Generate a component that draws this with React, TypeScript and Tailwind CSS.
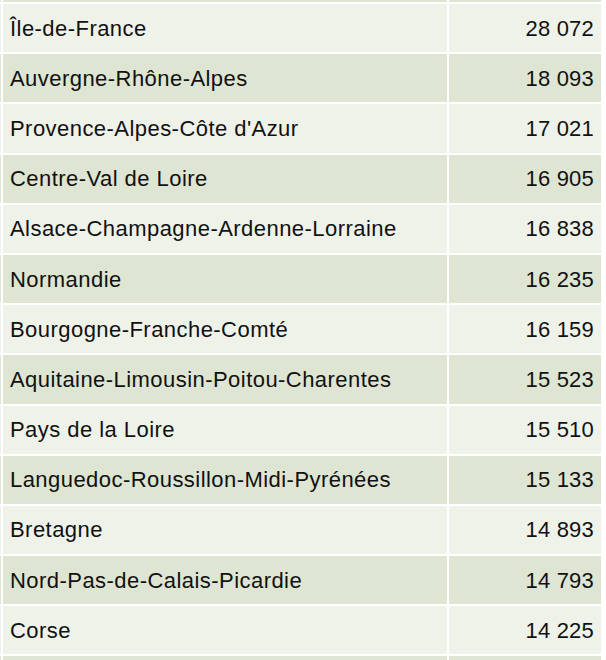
const rows: [string, string][] = [
  ["Île-de-France", "28 072"],
  ["Auvergne-Rhône-Alpes", "18 093"],
  ["Provence-Alpes-Côte d'Azur", "17 021"],
  ["Centre-Val de Loire", "16 905"],
  ["Alsace-Champagne-Ardenne-Lorraine", "16 838"],
  ["Normandie", "16 235"],
  ["Bourgogne-Franche-Comté", "16 159"],
  ["Aquitaine-Limousin-Poitou-Charentes", "15 523"],
  ["Pays de la Loire", "15 510"],
  ["Languedoc-Roussillon-Midi-Pyrénées", "15 133"],
  ["Bretagne", "14 893"],
  ["Nord-Pas-de-Calais-Picardie", "14 793"],
  ["Corse", "14 225"],
]

const light = "bg-[#eff2e9]"
const dark = "bg-[#dee5d2]"

export default function App() {
  return (
    <div className="h-[660px] w-[606px] overflow-hidden bg-white font-['Liberation_Sans',Arial,sans-serif] text-[22px] text-[#111]">
      <div className="grid grid-cols-[1px_444px_152px] gap-[2px]">
        {/* partial row cut off at the top */}
        <div className={`h-[2px] ${dark}`} />
        <div className={`h-[2px] ${dark}`} />
        <div className={`h-[2px] ${dark}`} />

        {rows.map(([region, value], i) => {
          const bg = i % 2 === 0 ? light : dark
          return [
            <div key={region + "-edge"} className={`h-[48.2px] ${bg}`} />,
            <div key={region} className={`flex h-[48.2px] items-center pl-[7px] tracking-[0.45px] ${bg}`}>
              {region}
            </div>,
            <div key={region + "-v"} className={`flex h-[48.2px] items-center justify-end pr-[7px] tracking-[0.2px] ${bg}`}>
              {value}
            </div>,
          ]
        })}

        {/* partial row cut off at the bottom */}
        <div className={`h-[10px] ${dark}`} />
        <div className={`h-[10px] ${dark}`} />
        <div className={`h-[10px] ${dark}`} />
      </div>
    </div>
  )
}
